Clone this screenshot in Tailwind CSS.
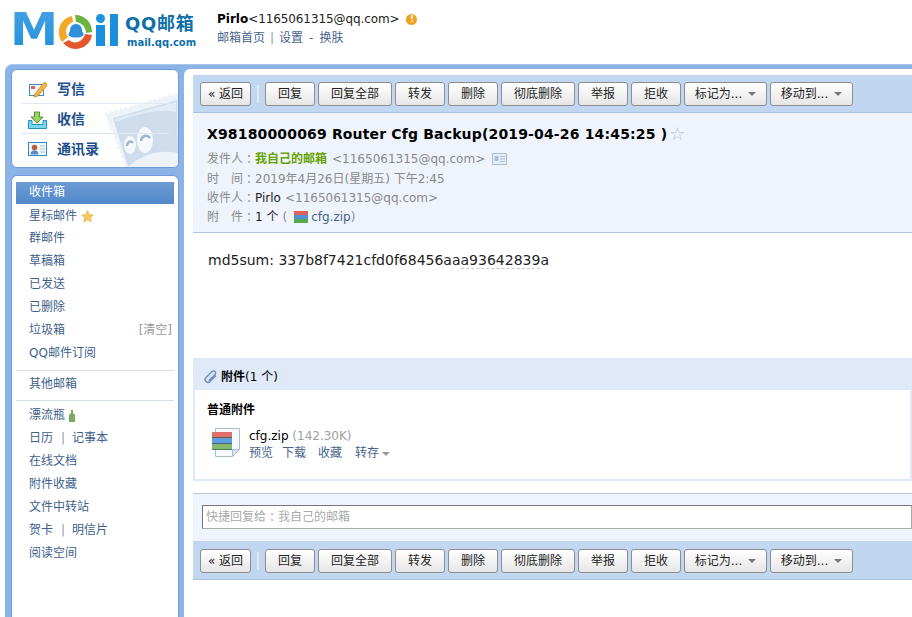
<!DOCTYPE html>
<html lang="zh-CN">
<head>
  <meta charset="UTF-8" />
  <title>QQ邮箱</title>
  <script src="https://cdn.jsdelivr.net/npm/@tailwindcss/browser@4"></script>
</head>
<body class="h-[617px] w-[912px] overflow-hidden bg-white font-['DejaVu_Sans','Noto_Sans_CJK_SC',sans-serif] text-[12px] text-black">

  <!-- top bar -->
  <header class="flex h-[64px] items-start">
    <div class="relative ml-[14px] mt-[14px] h-[34px] w-[105px]">
      <span class="absolute -left-[4px] -top-[10px] origin-left scale-x-[1.1] bg-gradient-to-b from-[#45a2e2] to-[#1b8fdc] bg-clip-text text-[44px] leading-[52px] font-bold text-transparent">M</span>
      <svg class="absolute left-[45px] top-[1px]" width="34" height="34" viewBox="0 0 34 34">
        <path d="M13 1A16.500 16.500 0 0 0 3 27L9 22C5 16 8 9 14 7Z" fill="#f5a623"/>
        <path d="M16 0A16.500 16.500 0 0 1 33 17L27 18C27 12 22 7 17 7Z" fill="#6db33f"/>
        <path d="M4 28A16.500 16.500 0 0 0 33 20L26 19C24 27 15 30 10 25Z" fill="#e2582c"/>
        <path d="M17 9c4 0 6 3 6 7 2 3 2 5 0 5-1 2-11 2-12 0-2 0-2-2 0-5 0-4 2-7 6-7Z" fill="#2f8fd8"/>
      </svg>
      <span class="absolute left-[82px] top-0 h-[9px] w-[9px] rounded-full bg-[#1f93de]"></span>
      <span class="absolute left-[82px] top-[11px] h-[21px] w-[9px] bg-[#1b8fdc]"></span>
      <span class="absolute left-[96px] top-0 h-[32px] w-[8px] bg-[#1b8fdc]"></span>
    </div>
    <div class="ml-[6px] mt-[14px] w-[72px] text-[#0f6fa8]">
      <div class="text-[18px] leading-[20px] font-bold tracking-[0.7px] whitespace-nowrap">QQ邮箱</div>
      <div class="ml-[2px] mt-[2px] text-[10px] leading-[13px] font-bold whitespace-nowrap">mail.qq.com</div>
    </div>
    <div class="ml-[20px] mt-[11px]">
      <div class="flex h-[17px] items-center whitespace-nowrap leading-[17px]">
        <b class="font-bold">Pirlo</b><span class="tracking-[-0.1px] text-[#222]">&lt;1165061315@qq.com&gt;</span>
        <span class="ml-[7px] flex h-[11px] w-[11px] items-center justify-center rounded-full bg-[#f0a020] text-[9px] leading-none font-bold text-white">!</span>
      </div>
      <div class="mt-[2px] flex gap-[5px] leading-[17px] text-[#46648c]">
        <a>邮箱首页</a><span class="text-[#8a9ab0]">|</span><a>设置</a><span class="mx-[1px]">-</span><a>换肤</a>
      </div>
    </div>
  </header>

  <!-- frame -->
  <div class="ml-[5px] flex h-[553px] rounded-tl-[8px] bg-[#8cb3e6] pl-[6px] pt-[5px] shadow-[inset_0_1px_0_#a9c7ee]">
    <aside class="flex w-[168px] shrink-0 flex-col gap-[7px]">
      <section class="relative h-[99px] overflow-hidden rounded-[6px] border border-[#6f9bd6] bg-white">
        <!-- stamp with the penguin, viewBox follows page coordinates -->
        <svg class="absolute bottom-0 right-0" width="80" height="80" viewBox="98 87 80 80">
          <path d="M104 113L178 92V167H125Z" fill="#eef3f9"/>
          <path d="M104 113L178 92M104 113L125 167" stroke="#fff" stroke-width="3" stroke-dasharray="0 5" stroke-linecap="round" fill="none"/>
          <path d="M113 118L177 100 178 167H128Z" fill="#cfdcec"/>
          <path d="M116 122C135 115 160 108 176 112V102L114 119Z" fill="#e2ebf5"/>
          <ellipse cx="130" cy="145" rx="6" ry="9" fill="#f6f9fc"/>
          <ellipse cx="145" cy="140" rx="8" ry="13" fill="#f6f9fc"/>
          <path d="M127 146a3.500 4.500 0 0 1 6-3" stroke="#9db5d2" stroke-width="2.500" fill="none"/>
          <path d="M141 141a5 5.500 0 0 1 9-3" stroke="#9db5d2" stroke-width="2.500" fill="none"/>
          <path d="M128 167C140 156 158 149 178 153V167Z" fill="#eef3f9"/>
        </svg>
        <nav class="relative px-[9px] pt-[4px]">
          <div class="flex h-[30px] items-center gap-[10px] border-b border-[#e3e9f0] pl-[7px] pt-[2px] text-[14px] font-bold text-[#1c4f8c]">
            <svg width="19" height="17" viewBox="0 0 19 17"><rect x="1.500" y="3.500" width="14" height="11" fill="#f6fafd" stroke="#3d8fc4"/><path d="M3 5h4v3H3z" fill="#d8654f"/><path d="M7 13L15 2.500a1.500 1.500 0 0 1 3.500 2.500L10 15l-4 1Z" fill="#f6b73c" stroke="#b5761c" stroke-width="0.700"/></svg>
            <span>写信</span>
          </div>
          <div class="flex h-[30px] items-center gap-[10px] border-b border-[#e3e9f0] pl-[7px] pt-[2px] text-[14px] font-bold text-[#1c4f8c]">
            <svg width="19" height="18" viewBox="0 0 19 18"><path d="M.5 9.500h3.500v4h11v-4h3.500v8H.5Z" fill="#7ad6ee" stroke="#2191bd"/><path d="M6.500 1h5v5h3.500l-6 6-6-6h3.500Z" fill="#9ad368" stroke="#4f9a2d"/></svg>
            <span>收信</span>
          </div>
          <div class="flex h-[30px] items-center gap-[10px] pl-[7px] text-[14px] font-bold text-[#1c4f8c]">
            <svg width="19" height="14" viewBox="0 0 19 14"><rect x="0.500" y="0.500" width="18" height="13" fill="#f4f8fc" stroke="#2f8ccc"/><circle cx="6.500" cy="5.500" r="2.800" fill="#b8623a"/><path d="M2.500 12.500c0-3 2-4.300 4-4.300s4 1.300 4 4.300Z" fill="#5f8ac4"/><path d="M12 4h5M12 7h5M12 10h5" stroke="#a9c0d8"/></svg>
            <span>通讯录</span>
          </div>
        </nav>
      </section>

      <nav class="flex-1 rounded-t-[6px] border border-b-0 border-[#6f9bd6] bg-white px-[4px] pt-[6px] leading-[23px] text-[#3d5f8c]">
        <a class="block h-[22px] bg-gradient-to-b from-[#6d9ad4] to-[#5189cb] pl-[13px] leading-[21px] text-white">收件箱</a>
        <a class="flex h-[23px] items-center pl-[13px] pt-[1px]">星标邮件
          <svg class="ml-[4px]" width="13" height="13" viewBox="0 0 24 24"><path d="M12 1l3.400 7.200 7.600 1-5.600 5.300 1.400 7.700L12 18.500 5.200 22.200l1.400-7.700L1 9.200l7.600-1Z" fill="#f4c860" stroke="#e2ae3e"/></svg>
        </a>
        <a class="block h-[23px] pl-[13px]">群邮件</a>
        <a class="block h-[23px] pl-[13px]">草稿箱</a>
        <a class="block h-[23px] pl-[13px]">已发送</a>
        <a class="block h-[23px] pl-[13px]">已删除</a>
        <div class="flex h-[23px] justify-between pl-[13px] pr-[2px]"><a>垃圾箱</a><a class="text-[#9a9a9a]">[清空]</a></div>
        <a class="block h-[23px] pl-[13px]">QQ邮件订阅</a>
        <div class="mb-[2px] mt-[5px] border-t border-[#d5dde8]"></div>
        <a class="block h-[23px] pl-[13px]">其他邮箱</a>
        <div class="mt-[4px] border-t border-[#d5dde8]"></div>
        <a class="mt-[3px] flex h-[23px] items-center pl-[13px]">漂流瓶
          <svg class="ml-[4px]" width="6" height="12" viewBox="0 0 6 12"><path d="M2 0h2v3l2 2v7H0V5l2-2Z" fill="#7aab5e"/></svg>
        </a>
        <div class="flex h-[23px] pl-[13px]"><a>日历</a><span class="ml-[8px] mr-[7px] text-[#8a9ab0]">|</span><a>记事本</a></div>
        <a class="block h-[23px] pl-[13px]">在线文档</a>
        <a class="block h-[23px] pl-[13px]">附件收藏</a>
        <a class="block h-[23px] pl-[13px]">文件中转站</a>
        <div class="flex h-[23px] pl-[13px]"><a>贺卡</a><span class="ml-[8px] mr-[7px] text-[#8a9ab0]">|</span><a>明信片</a></div>
        <a class="block h-[23px] pl-[13px]">阅读空间</a>
      </nav>
    </aside>

    <main class="ml-[5px] min-w-0 flex-1 rounded-tl-[6px] bg-white pl-[9px] pt-[6px]">
      <div class="flex h-[38px] items-center gap-[3px] border-b border-[#a9bfd8] bg-[#c1d7f1] pl-[7px] pt-[1px]">
        <button class="h-[24px] w-[51px] rounded-[3px] border border-[#8e8e8e] bg-gradient-to-b from-white to-[#e6e6e6] text-[#222]">« 返回</button>
        <span class="mx-[3px] h-[18px] w-[2px] bg-[#dfe8f2]"></span>
        <button class="h-[24px] w-[50px] rounded-[3px] border border-[#8e8e8e] bg-gradient-to-b from-white to-[#e6e6e6] text-[#222]">回复</button>
        <button class="h-[24px] w-[74px] rounded-[3px] border border-[#8e8e8e] bg-gradient-to-b from-white to-[#e6e6e6] text-[#222]">回复全部</button>
        <button class="h-[24px] w-[50px] rounded-[3px] border border-[#8e8e8e] bg-gradient-to-b from-white to-[#e6e6e6] text-[#222]">转发</button>
        <button class="h-[24px] w-[50px] rounded-[3px] border border-[#8e8e8e] bg-gradient-to-b from-white to-[#e6e6e6] text-[#222]">删除</button>
        <button class="h-[24px] w-[74px] rounded-[3px] border border-[#8e8e8e] bg-gradient-to-b from-white to-[#e6e6e6] text-[#222]">彻底删除</button>
        <button class="h-[24px] w-[50px] rounded-[3px] border border-[#8e8e8e] bg-gradient-to-b from-white to-[#e6e6e6] text-[#222]">举报</button>
        <button class="h-[24px] w-[50px] rounded-[3px] border border-[#8e8e8e] bg-gradient-to-b from-white to-[#e6e6e6] text-[#222]">拒收</button>
        <button class="flex h-[24px] w-[83px] items-center justify-center gap-[6px] rounded-[3px] border border-[#8e8e8e] bg-gradient-to-b from-white to-[#e6e6e6] text-[#222]">标记为... <i class="h-0 w-0 border-x-[4px] border-t-[4px] border-x-transparent border-t-[#777]"></i></button>
        <button class="flex h-[24px] w-[83px] items-center justify-center gap-[6px] rounded-[3px] border border-[#8e8e8e] bg-gradient-to-b from-white to-[#e6e6e6] text-[#222]">移动到... <i class="h-0 w-0 border-x-[4px] border-t-[4px] border-x-transparent border-t-[#777]"></i></button>
      </div>

      <section class="h-[120px] border-b border-[#a9c4de] bg-[#eff4fc] pl-[14px] pt-[10px] whitespace-nowrap">
        <h1 class="flex h-[22px] items-center text-[14px] leading-[22px] font-bold tracking-[0.16px]">X98180000069 Router Cfg Backup(2019-04-26 14:45:25 )<span class="ml-[2px] text-[18px] leading-none font-normal text-[#bdbdbd]">☆</span></h1>
        <div class="mt-[4px] flex h-[20px] items-center text-[#8a8a8a]">发件人<span class="font-['Noto_Sans_CJK_TC'] leading-none">：</span><b class="text-[#66a300]">我自己的邮箱</b><span class="ml-[5px]">&lt;1165061315@qq.com&gt;</span>
          <svg class="ml-[7px]" width="15" height="12" viewBox="0 0 15 12"><rect x="0.500" y="0.500" width="14" height="11" fill="#e6eef8" stroke="#a9bdd6"/><rect x="2.500" y="3" width="4" height="5" fill="#a9bdd6"/><path d="M8 3.500h5M8 6h5M8 8.500h5" stroke="#a9bdd6"/></svg>
        </div>
        <div class="flex h-[19px] items-center text-[#8a8a8a]">时&emsp;间<span class="font-['Noto_Sans_CJK_TC'] leading-none">：</span>2019年4月26日(星期五) 下午2:45</div>
        <div class="flex h-[19px] items-center text-[#8a8a8a]">收件人<span class="font-['Noto_Sans_CJK_TC'] leading-none">：</span><span class="text-[#222]">Pirlo</span><span class="ml-[4px]">&lt;1165061315@qq.com&gt;</span></div>
        <div class="flex h-[19px] items-center text-[#8a8a8a]">附&emsp;件<span class="font-['Noto_Sans_CJK_TC'] leading-none">：</span><span class="text-[#222]">1 个</span><span class="ml-[4px]">(</span>
          <svg class="ml-[7px] mr-[3px]" width="14" height="12" viewBox="0 0 14 12"><path d="M0 0h14v4H0z" fill="#e0605a"/><path d="M0 4h14v4H0z" fill="#4d90d8"/><path d="M0 8h14v4H0z" fill="#5aa84e"/></svg>
          <span class="text-[#46648c]">cfg.zip</span>)
        </div>
      </section>

      <div class="h-[125px] pl-[15px] pt-[17px] text-[14px] leading-[20px] text-[#222]">md5sum: 337b8f7421cfd0f68456aa<span class="border-b border-dashed border-[#c8c8c8]">a93642839</span>a</div>

      <section class="h-[123px] border-x-2 border-b-2 border-[#dfe9f8]">
        <div class="-mx-[2px] flex h-[32px] items-center gap-[3px] bg-[#dfe9f8] pl-[11px] pt-[5px]">
          <svg width="14" height="14" viewBox="0 0 14 14" fill="none"><path d="M11.500 6L6 11.500a2.800 2.800 0 0 1-4-4L8 1.500a2 2 0 0 1 3 3L5.200 10.200" stroke="#6f93bd" stroke-width="1.500" stroke-linecap="round"/></svg>
          <span><b>附件</b>(1 个)</span>
        </div>
        <div class="pl-[12px] pt-[11px]">
          <h3 class="h-[18px] leading-[18px] font-bold">普通附件</h3>
          <div class="ml-[5px] mt-[9px] flex gap-[7px] leading-[17px]">
            <svg width="30" height="34" viewBox="0 0 30 34">
              <path d="M3.500 .5h24v21l-7 7h-17Z" fill="#f7fafd" stroke="#a9bdd6"/>
              <path d="M20.500 28.500v-7h7Z" fill="#d8e4f0" stroke="#a9bdd6"/>
              <path d="M0 4h20v6H0z" fill="#e0706a"/><path d="M0 10h20v6H0z" fill="#5d9fe0"/><path d="M0 16h20v6H0z" fill="#84b870"/>
              <path d="M0 9.500h20M0 15.500h20M0 21.500h20" stroke="#2d4a3a" stroke-opacity="0.600"/>
            </svg>
            <div>
              <div>cfg.zip <span class="text-[#a0a0a0]">(142.30K)</span></div>
              <div class="flex items-center text-[#46648c]"><a>预览</a><a class="ml-[9px]">下载</a><a class="ml-[12px]">收藏</a><a class="ml-[13px] flex items-center gap-[3px]">转存<i class="mt-[1px] h-0 w-0 border-x-[4px] border-t-[4px] border-x-transparent border-t-[#999]"></i></a></div>
            </div>
          </div>
        </div>
      </section>

      <div class="mt-[12px] h-[48px] border-t border-[#b8c8dc] bg-[#eff4fc] pl-[9px] pt-[11px]">
        <div class="flex h-[24px] items-center border border-[#aaa] border-t-[#777] border-l-[#777] bg-white pl-[3px] text-[#aaa]">快捷回复给<span class="font-['Noto_Sans_CJK_TC'] leading-none">：</span>我自己的邮箱</div>
      </div>

      <div class="flex h-[39px] items-center gap-[3px] border-b border-[#a9bfd8] bg-[#c1d7f1] pl-[7px] pt-[2px]">
        <button class="h-[24px] w-[51px] rounded-[3px] border border-[#8e8e8e] bg-gradient-to-b from-white to-[#e6e6e6] text-[#222]">« 返回</button>
        <span class="mx-[3px] h-[18px] w-[2px] bg-[#dfe8f2]"></span>
        <button class="h-[24px] w-[50px] rounded-[3px] border border-[#8e8e8e] bg-gradient-to-b from-white to-[#e6e6e6] text-[#222]">回复</button>
        <button class="h-[24px] w-[74px] rounded-[3px] border border-[#8e8e8e] bg-gradient-to-b from-white to-[#e6e6e6] text-[#222]">回复全部</button>
        <button class="h-[24px] w-[50px] rounded-[3px] border border-[#8e8e8e] bg-gradient-to-b from-white to-[#e6e6e6] text-[#222]">转发</button>
        <button class="h-[24px] w-[50px] rounded-[3px] border border-[#8e8e8e] bg-gradient-to-b from-white to-[#e6e6e6] text-[#222]">删除</button>
        <button class="h-[24px] w-[74px] rounded-[3px] border border-[#8e8e8e] bg-gradient-to-b from-white to-[#e6e6e6] text-[#222]">彻底删除</button>
        <button class="h-[24px] w-[50px] rounded-[3px] border border-[#8e8e8e] bg-gradient-to-b from-white to-[#e6e6e6] text-[#222]">举报</button>
        <button class="h-[24px] w-[50px] rounded-[3px] border border-[#8e8e8e] bg-gradient-to-b from-white to-[#e6e6e6] text-[#222]">拒收</button>
        <button class="flex h-[24px] w-[83px] items-center justify-center gap-[6px] rounded-[3px] border border-[#8e8e8e] bg-gradient-to-b from-white to-[#e6e6e6] text-[#222]">标记为... <i class="h-0 w-0 border-x-[4px] border-t-[4px] border-x-transparent border-t-[#777]"></i></button>
        <button class="flex h-[24px] w-[83px] items-center justify-center gap-[6px] rounded-[3px] border border-[#8e8e8e] bg-gradient-to-b from-white to-[#e6e6e6] text-[#222]">移动到... <i class="h-0 w-0 border-x-[4px] border-t-[4px] border-x-transparent border-t-[#777]"></i></button>
      </div>
    </main>
  </div>
</body>
</html>
